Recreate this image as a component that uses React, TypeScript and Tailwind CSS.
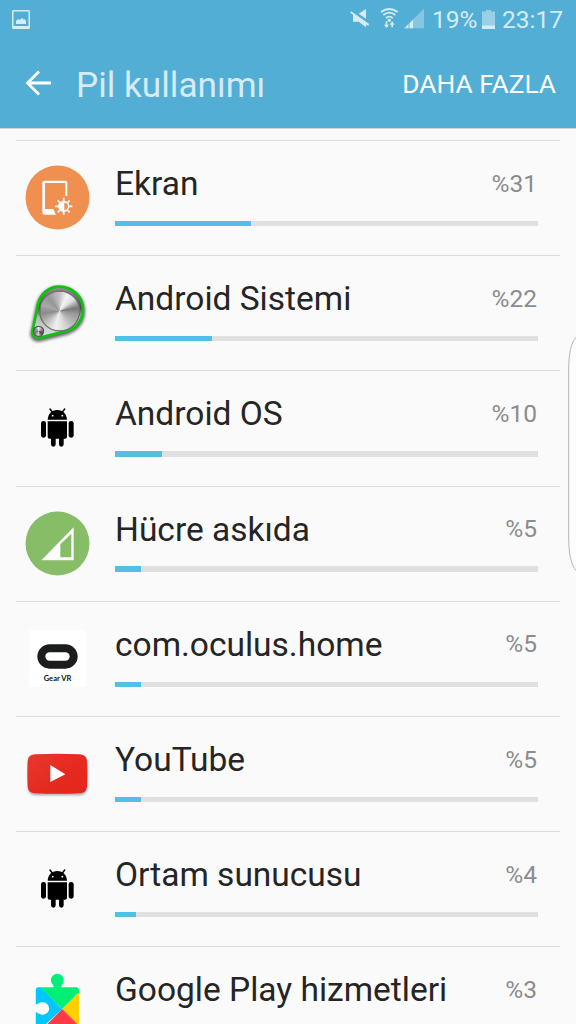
import type { ReactNode } from "react";

interface UsageItem {
  name: string;
  percent: number;
  fill: number;
  icon: ReactNode;
}

const ICON_CLASS = "block size-[65px] shrink-0 overflow-visible";

function DisplayIcon() {
  return (
    <svg viewBox="45 45 195 195" className={ICON_CLASS}>
      <circle cx="142.5" cy="142.5" r="96" fill="#ef8f50" />
      <path
        fill="#fff"
        fillRule="evenodd"
        d="M103 92h63a6 6 0 0 1 6 6v40h-6V99h-61v78h25l8 17h-35a6 6 0 0 1-6-6V98a6 6 0 0 1 6-6z"
      />
      <g stroke="#fff" strokeWidth="5">
        <path d="M161 143v9M161 186v9M135 169h9M178 169h9M143 151l6 6M173 181l6 6M179 151l-6 6M149 181l-6 6" />
      </g>
      <circle cx="161" cy="169" r="17" fill="#fff" />
      <path fill="#ef8f50" d="M163 158a11 11 0 0 1 0 22z" />
    </svg>
  );
}

function SystemIcon() {
  const outline = "M84 104C91 73 116 51 148 51c39 0 71 30 71 68 0 36-24 60-57 67l-72 18c-15 4-25-8-22-21z";
  return (
    <svg viewBox="45 31 195 195" className={ICON_CLASS}>
      <defs>
        <linearGradient id="plate" x1="0" y1="0" x2="0" y2="1">
          <stop offset="0" stopColor="#929292" />
          <stop offset="0.42" stopColor="#4a4a4a" />
          <stop offset="0.6" stopColor="#b8b8b8" />
          <stop offset="1" stopColor="#e4e4e4" />
        </linearGradient>
        <filter id="soft" x="-20%" y="-20%" width="140%" height="140%">
          <feGaussianBlur stdDeviation="5.5" />
        </filter>
      </defs>
      <path d={outline} transform="translate(0 5)" fill="#444" stroke="#444" strokeWidth="13" filter="url(#soft)" opacity="0.8" />
      <path d={outline} fill="url(#plate)" stroke="#0cc40c" strokeWidth="8" />
      <foreignObject x="87" y="62" width="124" height="124">
        <div className="size-[124px] rounded-full border-[4px] border-[#707070] bg-[conic-gradient(#c4c4c4_0deg,#f4f4f4_25deg,#e0e0e0_50deg,#777_80deg,#999_100deg,#b4b4b4_130deg,#dadada_165deg,#f0f0f0_195deg,#c6c6c6_225deg,#8b8b8b_262deg,#a8a8a8_290deg,#969696_320deg,#c4c4c4_360deg)]" />
      </foreignObject>
      <foreignObject x="69" y="168" width="34" height="34">
        <div className="size-[34px] rounded-full border-[4px] border-[#555] bg-[conic-gradient(#eee_0deg,#777_80deg,#444_125deg,#ddd_190deg,#777_250deg,#999_310deg,#eee_360deg)]" />
      </foreignObject>
    </svg>
  );
}

function AndroidIcon() {
  return (
    <svg viewBox="45 16 195 195" className={ICON_CLASS}>
      <path d="M120 58l8 11M164 58l-8 11" stroke="#000" strokeWidth="4.5" strokeLinecap="round" />
      <path d="M113 90c1-17 12-29 29-29s28 12 29 29z" />
      <path d="M113 95h58v46a6 6 0 0 1-6 6h-4v17a7 7 0 0 1-14 0v-17h-10v17a7 7 0 0 1-14 0v-17h-4a6 6 0 0 1-6-6z" />
      <rect x="93" y="94" width="15" height="50" rx="7" />
      <rect x="176" y="94" width="15" height="50" rx="7" />
      <circle cx="128" cy="78" r="2.8" fill="#fff" />
      <circle cx="157" cy="78" r="2.8" fill="#fff" />
    </svg>
  );
}

function CellIcon() {
  return (
    <svg viewBox="45 32 195 195" className={ICON_CLASS}>
      <circle cx="142.5" cy="129.5" r="96" fill="#86bd66" />
      <path fill="#fff" fillRule="evenodd" d="M191 81v99H94zM184 100l-33 32v39h33z" />
    </svg>
  );
}

function GearVrIcon() {
  return (
    <svg viewBox="45 32 195 195" className={ICON_CLASS}>
      <rect x="58" y="45" width="169" height="170" rx="6" fill="#fff" />
      <rect x="94" y="99" width="97" height="49" rx="24.5" fill="none" stroke="#1b1d1d" strokeWidth="24" />
      <text
        x="101"
        y="196"
        textLength="83"
        lengthAdjust="spacingAndGlyphs"
        fill="#111"
        className="font-['Lato',sans-serif] text-[22px] font-bold"
      >
        Gear VR
      </text>
    </svg>
  );
}

function YouTubeIcon() {
  return (
    <svg viewBox="45 18 195 195" className={ICON_CLASS}>
      <defs>
        <linearGradient id="red" x1="0" y1="0" x2="1" y2="1">
          <stop offset="0" stopColor="#e8382f" />
          <stop offset="0.55" stopColor="#e62a20" />
          <stop offset="1" stopColor="#e4251b" />
        </linearGradient>
        <filter id="lift" x="-10%" y="-10%" width="120%" height="130%">
          <feGaussianBlur stdDeviation="3" />
        </filter>
      </defs>
      <rect x="54" y="62" width="178" height="119" rx="22" fill="#777" opacity="0.6" filter="url(#lift)" />
      <path
        fill="url(#red)"
        d="M76 58q66-3 132 0c16 1 22 8 23 22q2 37 0 73c-1 14-7 21-23 22q-66 3-132 0c-16-1-22-8-23-22q-2-36 0-73c1-14 7-21 23-22z"
      />
      <path fill="#fff" d="M121 90l45 28-45 23z" />
    </svg>
  );
}

function PlayServicesIcon() {
  return (
    <svg viewBox="45 64 195 195" className={ICON_CLASS}>
      <defs>
        <clipPath id="puzzle">
          <path d="M85 113h46c1-7-8-10-8-22a19 19 0 0 1 38 0c0 12-8 15-7 22h44a9 9 0 0 1 9 9v122H77v-56c5 0 9 7 22 7a18 18 0 0 0 0-37c-13 0-17 7-22 7v-43a9 9 0 0 1 8-9z" />
        </clipPath>
      </defs>
      <g clipPath="url(#puzzle)">
        <path fill="#00c8ff" d="M70 90l87 88-87 80z" />
        <path fill="#00ef76" d="M70 60h150v55l-63 63-66-66z" />
        <path fill="#ffcf00" d="M208 127v102l-51-51z" />
        <path fill="#ff3945" d="M157 178l70 70H87z" />
      </g>
    </svg>
  );
}

const ITEMS: UsageItem[] = [
  { name: "Ekran", percent: 31, fill: 135.5, icon: <DisplayIcon /> },
  { name: "Android Sistemi", percent: 22, fill: 97, icon: <SystemIcon /> },
  { name: "Android OS", percent: 10, fill: 46.5, icon: <AndroidIcon /> },
  { name: "Hücre askıda", percent: 5, fill: 26, icon: <CellIcon /> },
  { name: "com.oculus.home", percent: 5, fill: 26, icon: <GearVrIcon /> },
  { name: "YouTube", percent: 5, fill: 26, icon: <YouTubeIcon /> },
  { name: "Ortam sunucusu", percent: 4, fill: 21, icon: <AndroidIcon /> },
  { name: "Google Play hizmetleri", percent: 3, fill: 16, icon: <PlayServicesIcon /> },
];

function StatusBar() {
  return (
    <div className="flex h-10 items-center justify-between pr-[13px] pl-3 text-[#d5ecf5]">
      <svg viewBox="0 0 18 19" className="mt-[-2px] h-[19px] w-[18px]" fill="currentColor">
        <path
          fillRule="evenodd"
          d="M1.5 0h15A1.5 1.5 0 0 1 18 1.5v16a1.5 1.5 0 0 1-1.5 1.5h-15A1.5 1.5 0 0 1 0 17.5v-16A1.5 1.5 0 0 1 1.5 0zM1.5 1.5V16h15V1.5z"
        />
        <path d="M4 14v-3l2-2 1.5 1L10 8l1.5 1.5L12.5 9l1.5 2v3z" />
      </svg>
      <div className="flex items-center">
        <svg viewBox="60 26 226 64" className="mt-[-2px] h-[21.33px] w-[75.33px]" fill="currentColor">
          <path d="M86 43l22-14v29z" />
          <path d="M69 45l47 31v3l-8-3v8L86 67H69z" />
          <path d="M62 38l54 38" stroke="currentColor" strokeWidth="5" />
          <g fill="none" stroke="currentColor" strokeWidth="5.5">
            <path d="M153 38q25-18 50 0M160 47q18-14 36 0M168 56q10-8 20 0" />
          </g>
          <circle cx="178" cy="63" r="5" />
          <path d="M167 66h5v10h5l-7.500 10-7.500-10h5zM184 84h5V76h5l-7.500-10-7.500 10h5z" />
          <path d="M282 28v59h-60z" opacity="0.4" />
          <path d="M249 61v26h-10V71zM235 75v12h-6v-6zM227 83v4h-5z" />
        </svg>
        <span className="ml-[6.5px] w-[44px] text-[24.5px] leading-10 whitespace-nowrap">19%</span>
        <svg viewBox="0 0 13 19" className="mt-[-2px] mr-[7.5px] ml-[5.5px] h-[19px] w-[13px]" fill="currentColor">
          <path d="M4 0h5v1.5h4V16H0V1.5h4z" opacity="0.55" />
          <path d="M0 15.5h13V19H0z" />
        </svg>
        <span className="w-[61px] text-[24.5px] leading-10 whitespace-nowrap">23:17</span>
      </div>
    </div>
  );
}

function AppBar() {
  return (
    <div className="flex h-[88px] items-center pr-5 pl-[25px]">
      <svg viewBox="0 0 27 26" className="mt-[-2px] h-[26px] w-[27px]" fill="none" stroke="#fff" strokeWidth="2.8">
        <path d="M14 1.5L2.5 13 14 24.5M2.5 13H26" />
      </svg>
      <h1 className="mt-0.5 ml-6 grow text-[35.2px] leading-[88px] font-normal whitespace-nowrap text-[#d5ebf5]">
        Pil kullanımı
      </h1>
      <button className="text-[26.3px] leading-[88px] whitespace-nowrap text-white">DAHA FAZLA</button>
    </div>
  );
}

function UsageRow({ item }: { item: UsageItem }) {
  return (
    <li className="mx-4 flex h-[115.2px] border-t border-[#dcdcdc] pt-6 pr-[22px] pl-[9px]">
      {item.icon}
      <div className="ml-[25px] grow">
        <div className="mt-[-5.4px] flex h-[49px] items-center justify-between">
          <span className="text-[33.5px] whitespace-nowrap text-[#252525]">{item.name}</span>
          <span className="mr-px text-[24.5px] text-[#8a8c8e]">%{item.percent}</span>
        </div>
        <div className="mt-[12.2px] h-[5.5px] bg-[#e0e0e0]">
          <div className="h-full bg-[#54bfe4]" style={{ width: item.fill }} />
        </div>
      </div>
    </li>
  );
}

export default function App() {
  return (
    <div className="relative flex h-[1024px] w-[576px] flex-col overflow-hidden bg-[#fafafa] font-['Roboto',sans-serif]">
      <header className="h-32 shrink-0 bg-[#53aed5] shadow-[0_1px_0_#d3d3d3]">
        <StatusBar />
        <AppBar />
      </header>
      <ul className="pt-3">
        {ITEMS.map((item) => (
          <UsageRow key={item.name} item={item} />
        ))}
      </ul>
      {/* edge panel handle, sits over the list */}
      <svg
        viewBox="0 0 8 236"
        className="absolute top-[336px] right-0 h-[236px] w-2"
        fill="#fcfcfc"
        stroke="#b3b5b6"
        strokeWidth="1"
      >
        <path d="M8.5 1C3 6 .7 18 .7 34v168c0 16 2.3 27 7.8 33" />
      </svg>
    </div>
  );
}
